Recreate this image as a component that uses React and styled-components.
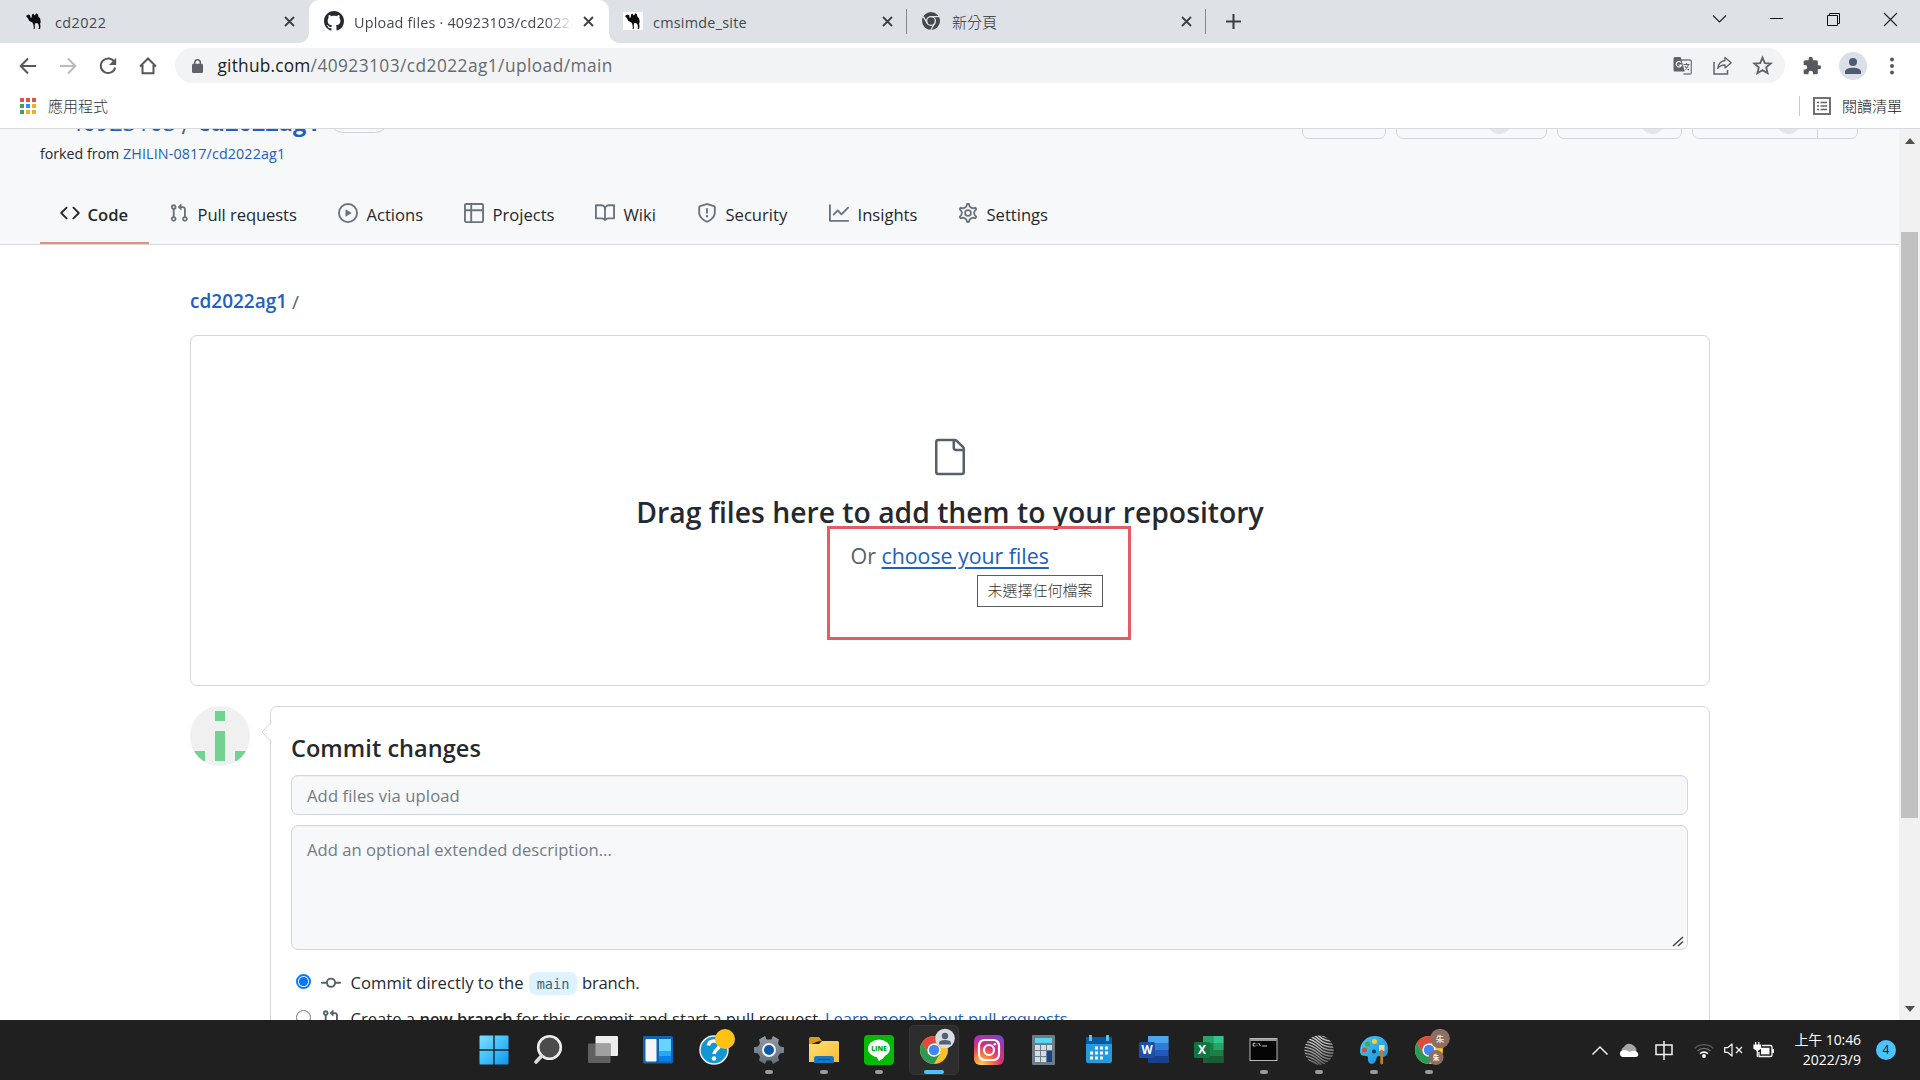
import React from "react";
import styled, { createGlobalStyle } from "styled-components";

const GlobalStyle = createGlobalStyle`
  *, *::before, *::after { box-sizing: border-box; }
  html, body { margin: 0; padding: 0; overflow: hidden; background: #fff; }
  body { font-family: "Open Sans", "Noto Sans CJK TC", sans-serif; color: #24292f; }
`;

const Screen = styled.div`
  width: 1920px;
  height: 1080px;
  display: flex;
  flex-direction: column;
  overflow: hidden;
`;

const Icon = styled.svg`
  display: block;
  flex: none;
  overflow: visible;
  margin-left: ${(p) => p.$ml || 0}px;
`;

const Text = styled.span`
  display: block;
  flex: none;
  white-space: pre;
  width: ${(p) => (p.$w ? `${p.$w}px` : "auto")};
  margin-left: ${(p) => p.$ml || 0}px;
  margin-top: ${(p) => p.$mt || 0}px;
  font-size: ${(p) => p.$size || 16.6}px;
  font-weight: ${(p) => p.$weight || 400};
  letter-spacing: ${(p) => p.$ls || 0}px;
  line-height: ${(p) => p.$lh || 24}px;
  color: ${(p) => p.$color || "#24292f"};
  text-align: ${(p) => p.$align || "left"};
`;

/* ---------- browser tabs ---------- */

const TabStrip = styled.div`
  height: 43px;
  flex: none;
  display: flex;
  background: #dee1e6;
`;

const Tab = styled.div`
  position: relative;
  width: ${(p) => p.$w}px;
  height: 43px;
  display: flex;
  align-items: center;
  padding: 0 0 1px ${(p) => p.$pl}px;
  background: ${(p) => (p.$active ? "#fff" : "transparent")};
  border-radius: ${(p) => (p.$active ? "10px 10px 0 0" : "0")};
  &::before, &::after {
    content: "";
    display: ${(p) => (p.$active ? "block" : "none")};
    position: absolute;
    bottom: 0;
    width: 10px;
    height: 10px;
  }
  &::before { left: -10px; background: radial-gradient(circle at 0 0, transparent 9.5px, #fff 10px); }
  &::after { right: -10px; background: radial-gradient(circle at 100% 0, transparent 9.5px, #fff 10px); }
`;

const TabTitle = styled(Text)`
  width: ${(p) => p.$w}px;
  overflow: hidden;
  ${(p) => p.$fade && "-webkit-mask-image: linear-gradient(90deg, #000 87%, transparent 100%);"}
`;

const TabDivider = styled.div`
  width: 1px;
  height: 25px;
  margin-top: 9px;
  background: #85888d;
`;

const WindowControls = styled.div`
  margin-left: auto;
  display: flex;
  align-items: center;
  height: 38px;
  gap: 44px;
  padding-right: 23px;
`;

const CloseX = ({ ml = 0 }) => (
  <Icon width="11" height="11" viewBox="0 0 11 11" $ml={ml}>
    <path d="M1 1l9 9M10 1l-9 9" stroke="#3c4043" strokeWidth="1.8" fill="none" />
  </Icon>
);

const Camel = ({ ml = 0, boxed }) => (
  <Icon width="20" height="18" viewBox="0 0 20 18" $ml={ml}>
    {boxed && <rect width="20" height="18" fill="#fff" />}
    <path
      d="M2.5 3.5l2-1 1.7.8.3 2.4 1.2-.2L8 2.8 9.3 1.5l1 1.5.6.6L12.3 1.300l1.5.9.7 2.5 1.6 1.6.6 3.7-.6 1.700.4 2.300-.4 3h-1.800l.7-1-.3-3.300-1.6-1.700-2 .2-.4 2.300.3 3.200H9.300l.6-1-.6-3.500-.9-1.700-3-1.400L3.600 5.800 2.300 4.800z"
      fill="#0a0a0a"
    />
  </Icon>
);

const Octocat = () => (
  <Icon width="20" height="20" viewBox="0 0 16 16" fill="#24292f">
    <path d="M8 0C3.58 0 0 3.58 0 8c0 3.54 2.29 6.53 5.47 7.59.4.07.55-.17.55-.38 0-.19-.01-.82-.01-1.49-2.01.37-2.53-.49-2.69-.94-.09-.23-.48-.94-.82-1.13-.28-.15-.68-.52-.01-.53.63-.01 1.08.58 1.23.82.72 1.21 1.87.87 2.33.66.07-.52.28-.87.51-1.07-1.78-.2-3.64-.89-3.64-3.95 0-.87.31-1.59.82-2.15-.08-.2-.36-1.02.08-2.12 0 0 .67-.21 2.2.82.64-.18 1.32-.27 2-.27s1.36.09 2 .27c1.53-1.04 2.2-.82 2.2-.82.44 1.1.16 1.92.08 2.12.51.56.82 1.27.82 2.15 0 3.07-1.87 3.75-3.65 3.95.29.25.54.73.54 1.48 0 1.07-.01 1.93-.01 2.2 0 .21.15.46.55.38A8.01 8.01 0 0016 8c0-4.42-3.58-8-8-8z" />
  </Icon>
);

const ChromeMono = () => (
  <Icon width="18" height="18" viewBox="0 0 18 18">
    <circle cx="9" cy="9" r="9" fill="#45484c" />
    <circle cx="9" cy="9" r="4.4" fill="none" stroke="#dee1e6" strokeWidth="1.4" />
    <path d="M9 4.6h8M5.2 11.2L1.3 4.6M12.8 11.2l-4 6.8" stroke="#dee1e6" strokeWidth="1.3" />
  </Icon>
);

const Tabs = () => (
  <TabStrip>
    <Tab $w={309} $pl={24}>
      <Camel />
      <TabTitle $ml={11} $w={229} $size={14.4} $color="#45494d" $ls={0.45} $mt={3}>cd2022</TabTitle>
      <CloseX />
    </Tab>
    <Tab $w={300} $pl={15} $active>
      <Octocat />
      <TabTitle $ml={10} $w={219} $size={14.4} $color="#45494d" $ls={0.2} $mt={3} $fade>Upload files · 40923103/cd2022ag1</TabTitle>
      <CloseX ml={10} />
    </Tab>
    <Tab $w={297} $pl={14}>
      <Camel boxed />
      <TabTitle $ml={10} $w={229} $size={14.4} $color="#45494d" $ls={0.25} $mt={3}>cmsimde_site</TabTitle>
      <CloseX />
    </Tab>
    <TabDivider />
    <Tab $w={298} $pl={15}>
      <ChromeMono />
      <TabTitle $ml={12} $w={229} $size={15} $weight={300} $color="#303336" $mt={2}>新分頁</TabTitle>
      <CloseX />
    </Tab>
    <TabDivider />
    <Tab $w={40} $pl={20}>
      <Icon width="15" height="15" viewBox="0 0 15 15">
        <path d="M7.5 0v15M0 7.5h15" stroke="#3c4043" strokeWidth="2.1" />
      </Icon>
    </Tab>
    <WindowControls>
      <Icon width="13" height="8" viewBox="0 0 13 8"><path d="M0 .5l6.5 6.5L13 .5" fill="none" stroke="#222" strokeWidth="1.1" /></Icon>
      <Icon width="13" height="13" viewBox="0 0 13 13"><path d="M0 5.5h13" stroke="#111" strokeWidth="1" /></Icon>
      <Icon width="13" height="13" viewBox="0 0 13 13"><path d="M.5 2.5h10v10H.5zM2.5 2.5v-2h10v10h-2" fill="none" stroke="#111" /></Icon>
      <Icon width="13" height="13" viewBox="0 0 13 13"><path d="M0 0l13 13M13 0L0 13" stroke="#222" strokeWidth="1.1" /></Icon>
    </WindowControls>
  </TabStrip>
);

/* ---------- toolbar ---------- */

const Toolbar = styled.div`
  height: 45px;
  flex: none;
  display: flex;
  align-items: center;
  padding: 0 0 0 19px;
  background: #fff;
`;

const NavButtons = styled.div`
  width: 156px;
  display: flex;
  gap: 22px;
`;

const Omnibox = styled.div`
  width: 1610px;
  height: 35px;
  display: flex;
  align-items: center;
  padding-left: 17px;
  border-radius: 18px;
  background: #f1f3f4;
`;

const OmniActions = styled.div`
  display: flex;
  gap: 21px;
  margin-left: auto;
  padding-right: 13px;
`;

const Avatar = styled.div`
  width: 28px;
  height: 28px;
  margin-left: 17px;
  border-radius: 50%;
  display: flex;
  align-items: center;
  justify-content: center;
  background: #dadfe8;
`;

const AddressBar = () => (
  <Toolbar>
    <NavButtons>
      <Icon width="18" height="18" viewBox="0 0 18 18"><path d="M17 9H2.5M9 1.5L1.7 9 9 16.5" fill="none" stroke="#55595d" strokeWidth="2" /></Icon>
      <Icon width="18" height="18" viewBox="0 0 18 18"><path d="M1 9h14.5M9 1.5L16.3 9 9 16.5" fill="none" stroke="#b9bbbe" strokeWidth="2" /></Icon>
      <Icon width="18" height="18" viewBox="0 0 18 18">
        <path d="M15.4 5A7.3 7.3 0 1 0 16.2 10.5" fill="none" stroke="#55595d" strokeWidth="2" />
        <path d="M17.2.8v7.2H10z" fill="#55595d" />
      </Icon>
      <Icon width="18" height="18" viewBox="0 0 18 18"><path d="M1 9.5L9 1.5l8 8M3.5 8v8.2h11V8" fill="none" stroke="#55595d" strokeWidth="2" /></Icon>
    </NavButtons>
    <Omnibox>
      <Icon width="11" height="14" viewBox="0 0 11 14">
        <rect y="4.8" width="11" height="9.2" rx="1.2" fill="#5f6368" />
        <path d="M2.7 5.5V3.6a2.8 2.8 0 0 1 5.6 0v1.9" fill="none" stroke="#5f6368" strokeWidth="1.5" />
      </Icon>
      <Text $ml={14.5} $size={17.3} $ls={0.22} $color="#202124">github.com</Text>
      <Text $size={17.3} $ls={0.45} $color="#676b70">/40923103/cd2022ag1/upload/main</Text>
      <OmniActions>
        <Icon width="19" height="19" viewBox="0 0 19 19">
          <path d="M8 4h9a1.3 1.3 0 0 1 1.3 1.3v11.4A1.3 1.3 0 0 1 17 18H10.5" fill="none" stroke="#777b80" strokeWidth="1.3" />
          <path d="M2 1h5.6l4.2 14.5H2A1.5 1.5 0 0 1 .5 14V2.5A1.5 1.5 0 0 1 2 1z" fill="#5f6368" />
          <path d="M8 6.5A2.7 2.7 0 1 0 8.5 9H5.8" fill="none" stroke="#fff" strokeWidth="1.2" />
          <path d="M10.5 8.5h6M13.5 7v1.5M15.5 8.5c-.5 2.5-2 4-3.5 5M12 10c.8 1.7 2 3 4 4" fill="none" stroke="#5f6368" strokeWidth="1.1" />
        </Icon>
        <Icon width="19" height="19" viewBox="0 0 19 19">
          <path d="M1 6v12h13.5v-4" fill="none" stroke="#5f6368" strokeWidth="1.5" />
          <path d="M12 1.5l6.2 5.2-6.2 5.2V9c-3.5 0-5.6 1-7.3 3.5C5.2 8.5 7.5 5.2 12 4.5z" fill="none" stroke="#5f6368" strokeWidth="1.3" strokeLinejoin="round" />
        </Icon>
        <Icon width="19" height="19" viewBox="0 0 24 24">
          <path d="M12 2l2.9 6.9 7.5.6-5.7 4.9 1.7 7.3L12 17.9l-6.4 3.8 1.7-7.3-5.7-4.9 7.5-.6z" fill="none" stroke="#5f6368" strokeWidth="2.3" />
        </Icon>
      </OmniActions>
    </Omnibox>
    <Icon width="20" height="20" viewBox="0 0 24 24" $ml={17}>
      <path fill="#55595d" d="M20.5 11H19V7c0-1.1-.9-2-2-2h-4V3.5a2.5 2.5 0 0 0-5 0V5H4c-1.1 0-2 .9-2 2v3.8h1.5a2.7 2.7 0 0 1 0 5.4H2V20c0 1.1.9 2 2 2h3.8v-1.5a2.7 2.7 0 0 1 5.4 0V22H17c1.1 0 2-.9 2-2v-4h1.5a2.5 2.5 0 0 0 0-5z" />
    </Icon>
    <Avatar>
      <Icon width="16" height="16" viewBox="0 0 16 16"><circle cx="8" cy="4" r="4" fill="#4b5b70" /><path d="M0 16v-2.2C0 11 4 9.8 8 9.8s8 1.2 8 4V16z" fill="#4b5b70" /></Icon>
    </Avatar>
    <Icon width="4" height="18" viewBox="0 0 4 18" $ml={23} fill="#55595d">
      <circle cx="2" cy="2.5" r="2" /><circle cx="2" cy="9" r="2" /><circle cx="2" cy="15.5" r="2" />
    </Icon>
  </Toolbar>
);

const Bookmarks = styled.div`
  height: 41px;
  flex: none;
  display: flex;
  align-items: center;
  padding: 0 18px 4px 20px;
  border-bottom: 1px solid #d6d9dd;
  background: #fff;
`;

const AppsGrid = styled.div`
  display: grid;
  grid-template-columns: repeat(3, 4px);
  gap: 2px;
`;

const AppDot = styled.i`
  height: 4px;
  background: ${(p) => p.$c};
`;

const BarDivider = styled.div`
  width: 1px;
  height: 20px;
  margin-left: auto;
  background: #c9cbce;
`;

const APP_DOTS = ["#e0524a", "#e0524a", "#e0524a", "#3fa35c", "#2f8fe8", "#eeb02c", "#3fa35c", "#eeb02c", "#eeb02c"];

const BookmarksBar = () => (
  <Bookmarks>
    <AppsGrid>
      {APP_DOTS.map((c, i) => <AppDot key={i} $c={c} />)}
    </AppsGrid>
    <Text $ml={12} $size={15} $weight={300} $color="#303336">應用程式</Text>
    <BarDivider />
    <Icon width="18" height="18" viewBox="0 0 18 18" $ml={13}>
      <rect x="1" y="1" width="16" height="16" fill="none" stroke="#5f6368" strokeWidth="1.8" />
      <path d="M4 5.5h2M4 9h2M4 12.5h2M7.5 5.5h6.5M7.5 9h6.5M7.5 12.5h6.5" stroke="#5f6368" strokeWidth="1.7" />
    </Icon>
    <Text $ml={11} $size={15} $weight={300} $color="#111">閱讀清單</Text>
  </Bookmarks>
);

/* ---------- page ---------- */

const Viewport = styled.div`
  height: 891px;
  flex: none;
  display: flex;
  overflow: hidden;
`;

const Page = styled.main`
  width: 1899px;
  height: 891px;
  overflow: hidden;
`;

const RepoHeader = styled.header`
  height: 116px;
  background: #f6f8fa;
  border-bottom: 1px solid #d5dae0;
  display: flex;
  flex-direction: column;
`;

const TitleRow = styled.div`
  height: 35px;
  margin-top: -25px;
  flex: none;
  display: flex;
  padding: 0 41px 0 69px;
`;

const Pill = styled.div`
  width: 58px;
  height: 25px;
  margin: 4px auto 0 0;
  border: 1px solid #cdd3da;
  border-radius: 13px;
`;

const RepoButton = styled.div`
  width: ${(p) => p.$w}px;
  height: 35px;
  margin-left: ${(p) => p.$ml || 0}px;
  padding-left: ${(p) => p.$pl || 0}px;
  border: 1px solid #d2d5d9;
  border-radius: ${(p) => p.$r || "7px"};
  display: flex;
  align-items: center;
`;

const Counter = styled.i`
  width: 25px;
  height: 25px;
  border-radius: 13px;
  background: #e2e5e9;
`;

const ForkRow = styled.div`
  display: flex;
  height: 31px;
  align-items: center;
  padding: 1px 0 0 40px;
`;

const RepoNav = styled.nav`
  display: flex;
  height: 60px;
  margin-top: 16px;
  padding-left: 40px;
`;

const NavItem = styled.a`
  width: ${(p) => p.$w}px;
  height: 60px;
  flex: none;
  display: flex;
  align-items: center;
  padding: 0 0 0 20px;
  border-bottom: 2px solid ${(p) => (p.$active ? "#e88f7b" : "transparent")};
`;

const PULL_REQUEST = "M7.177 3.073L9.573.677A.25.25 0 0110 .854v4.792a.25.25 0 01-.427.177L7.177 3.427a.25.25 0 010-.354zM3.75 2.5a.75.75 0 100 1.5.75.75 0 000-1.5zm-2.25.75a2.25 2.25 0 113 2.122v5.256a2.251 2.251 0 11-1.5 0V5.372A2.25 2.25 0 011.5 3.25zM11 2.5h-1V4h1a1 1 0 011 1v5.628a2.251 2.251 0 101.5 0V5A2.5 2.5 0 0011 2.5zm1 10.25a.75.75 0 111.5 0 .75.75 0 01-1.5 0zM3.75 12a.75.75 0 100 1.5.75.75 0 000-1.5z";

const COMMIT = "M10.5 7.75a2.5 2.5 0 11-5 0 2.5 2.5 0 015 0zm1.43.75a4.002 4.002 0 01-7.86 0H.75a.75.75 0 110-1.5h3.32a4.001 4.001 0 017.86 0h3.32a.75.75 0 110 1.5h-3.32z";

const NAV = [
  { w: 109, label: "Code", active: true, d: "M4.72 3.22a.75.75 0 011.06 1.06L2.06 8l3.72 3.72a.75.75 0 11-1.06 1.06L.47 8.53a.75.75 0 010-1.06l4.25-4.25zm6.56 0a.75.75 0 10-1.06 1.06L13.94 8l-3.72 3.72a.75.75 0 101.06 1.06l4.25-4.25a.75.75 0 000-1.06l-4.25-4.25z" },
  { w: 169, label: "Pull requests", ls: -0.08, d: PULL_REQUEST },
  { w: 126, label: "Actions", d: "M1.5 8a6.5 6.5 0 1113 0 6.5 6.5 0 01-13 0zM8 0a8 8 0 100 16A8 8 0 008 0zM6.379 5.227A.25.25 0 006 5.442v5.117a.25.25 0 00.379.214l4.264-2.559a.25.25 0 000-.428L6.379 5.227z" },
  { w: 131, label: "Projects", d: "M1.75 0A1.75 1.75 0 000 1.75v12.5C0 15.216.784 16 1.75 16h12.5A1.75 1.75 0 0016 14.25V1.75A1.75 1.75 0 0014.25 0H1.75zM1.5 1.75a.25.25 0 01.25-.25H5V5H1.5V1.75zM6.5 6.5v8h7.75a.25.25 0 00.25-.25V6.5h-8zm8-1.5V1.75a.25.25 0 00-.25-.25H6.5V5h8zm-13 1.5v7.75c0 .138.112.25.25.25H5v-8H1.5z" },
  { w: 102, label: "Wiki", d: "M0 1.75A.75.75 0 01.75 1h4.253c1.227 0 2.317.59 3 1.501A3.744 3.744 0 0111.006 1h4.245a.75.75 0 01.75.75v10.5a.75.75 0 01-.75.75h-4.507a2.25 2.25 0 00-1.591.659l-.622.621a.75.75 0 01-1.06 0l-.622-.621A2.25 2.25 0 005.258 13H.75a.75.75 0 01-.75-.75V1.75zm8.755 3a2.25 2.25 0 012.25-2.25H14.5v9h-3.757c-.71 0-1.4.201-1.992.572l.004-7.322zm-1.504 7.324l.004-5.073-.002-2.253A2.25 2.25 0 005.003 2.5H1.5v9h3.757a3.75 3.75 0 011.994.574z" },
  { w: 132, label: "Security", d: "M7.467.133a1.75 1.75 0 011.066 0l5.25 1.68A1.75 1.75 0 0115 3.48V7c0 1.566-.32 3.182-1.303 4.682-.983 1.498-2.585 2.813-5.032 3.855a1.7 1.7 0 01-1.33 0c-2.447-1.042-4.049-2.357-5.032-3.855C1.32 10.182 1 8.566 1 7V3.48a1.75 1.75 0 011.217-1.667l5.25-1.68zm.61 1.429a.25.25 0 00-.153 0l-5.25 1.68a.25.25 0 00-.174.238V7c0 1.358.275 2.666 1.057 3.86.784 1.194 2.121 2.34 4.366 3.297a.2.2 0 00.154 0c2.245-.956 3.582-2.104 4.366-3.298C13.225 9.666 13.5 8.36 13.5 7V3.48a.25.25 0 00-.174-.237l-5.25-1.68zM9 10.5a1 1 0 11-2 0 1 1 0 012 0zm-.25-5.75a.75.75 0 10-1.5 0v3a.75.75 0 001.5 0v-3z" },
  { w: 129, label: "Insights", d: "M1.5 1.75a.75.75 0 00-1.5 0v12.5c0 .414.336.75.75.75h14.5a.75.75 0 000-1.5H1.5V1.75zm14.28 2.53a.75.75 0 00-1.06-1.06L10 7.94 7.53 5.47a.75.75 0 00-1.06 0L3.22 8.72a.75.75 0 001.06 1.06L7 7.06l2.47 2.47a.75.75 0 001.06 0l5.25-5.25z" },
  { w: 130, label: "Settings", stroke: true, d: "M7.429 1.525a6.593 6.593 0 011.142 0c.036.003.108.036.137.146l.289 1.105c.147.56.55.967.997 1.189.174.086.341.183.501.29.417.278.97.423 1.53.27l1.102-.303c.11-.03.175.016.195.046.219.31.41.641.573.989.014.031.022.11-.059.19l-.815.806c-.411.406-.562.957-.53 1.456a4.588 4.588 0 010 .582c-.032.499.119 1.05.53 1.456l.815.806c.08.08.073.159.059.19a6.494 6.494 0 01-.573.99c-.02.029-.086.074-.195.045l-1.103-.303c-.559-.153-1.112-.008-1.529.27-.16.107-.327.204-.5.29-.449.222-.851.628-.998 1.189l-.289 1.105c-.029.11-.101.143-.137.146a6.613 6.613 0 01-1.142 0c-.036-.003-.108-.037-.137-.146l-.289-1.105c-.147-.56-.55-.967-.997-1.189a4.502 4.502 0 01-.501-.29c-.417-.278-.97-.423-1.53-.27l-1.102.303c-.11.03-.175-.016-.195-.046a6.492 6.492 0 01-.573-.989c-.014-.031-.022-.11.059-.19l.815-.806c.411-.406.562-.957.53-1.456a4.587 4.587 0 010-.582c.032-.499-.119-1.05-.53-1.456l-.815-.806c-.08-.08-.073-.159-.059-.19a6.44 6.44 0 01.573-.99c.02-.029.086-.075.195-.045l1.103.303c.559.153 1.112.008 1.529-.27.16-.107.327-.204.5-.29.449-.222.851-.628.998-1.189l.289-1.105c.029-.11.101-.143.137-.146z" },
];

const Content = styled.section`
  width: 1520px;
  margin-left: 190px;
`;

const Crumbs = styled.div`
  height: 90px;
  display: flex;
  align-items: flex-start;
  padding-top: 42px;
`;

const DropZone = styled.div`
  height: 351px;
  border: 1px solid #d2d7dc;
  border-radius: 7px;
  display: flex;
  flex-direction: column;
  align-items: center;
  padding-top: 101px;
`;

const ChooseRow = styled.div`
  position: relative;
  width: 304px;
  height: 44px;
  flex: none;
  display: flex;
  align-items: center;
  margin-left: 58px;
  padding-left: 23.5px;
`;

const ChooseLink = styled(Text)`
  text-decoration: underline;
  text-decoration-thickness: 2px;
  text-underline-offset: 3px;
`;

const Highlight = styled.div`
  position: absolute;
  left: 0;
  top: -8px;
  width: 304px;
  height: 114px;
  border: 3px solid #e25c61;
`;

const Tooltip = styled.div`
  position: absolute;
  left: 150px;
  top: 41px;
  width: 126px;
  height: 32px;
  display: flex;
  align-items: center;
  justify-content: center;
  padding-bottom: 2px;
  border: 1px solid #5c5c5c;
  background: #fff;
`;

const CommitRow = styled.div`
  display: flex;
  margin-top: 20px;
`;

const CommitBox = styled.div`
  position: relative;
  width: 1440px;
  height: 420px;
  margin-left: 20px;
  padding: 24px 21px 0 20px;
  border: 1px solid #d2d7dc;
  border-radius: 7px;
`;

const Caret = styled.svg`
  position: absolute;
  left: -10px;
  top: 15px;
`;

const Field = styled.div`
  height: ${(p) => p.$h}px;
  margin-top: ${(p) => p.$mt}px;
  padding: ${(p) => p.$pt}px 6px 3px 15px;
  border: 1px solid #d0d7de;
  border-radius: 7px;
  background: #f6f8fa;
  box-shadow: inset 0 1px 0 rgba(208, 215, 222, 0.2);
  display: flex;
  justify-content: space-between;
`;

const Grip = styled.svg`
  align-self: flex-end;
  margin-right: -3px;
  margin-bottom: -1px;
`;

const Options = styled.div`
  margin-top: 15px;
`;

const Option = styled.label`
  height: 36px;
  display: flex;
  align-items: center;
  padding-left: 5px;
`;

const Radio = styled.i`
  width: 15px;
  height: 15px;
  flex: none;
  margin-bottom: 3px;
  border-radius: 50%;
  border: ${(p) => (p.$on ? "2px solid #0b75ff" : "1px solid #767676")};
  background: ${(p) => (p.$on ? "radial-gradient(circle, #0b75ff 4.2px, #fff 4.8px)" : "#fff")};
`;

const OptionIcon = styled(Icon)`
  margin: 0 0 1px 10px;
`;

const Branch = styled.code`
  width: 48px;
  height: 23px;
  flex: none;
  border-radius: 7px;
  background: #ddf4ff;
  color: #48606f;
  font: 13.6px/25px "DejaVu Sans Mono", monospace;
  text-align: center;
`;

const ScrollBar = styled.div`
  width: 21px;
  height: 891px;
  display: flex;
  flex-direction: column;
  align-items: center;
  padding: 9px 0 8px;
  background: #f1f1f1;
`;

const Thumb = styled.div`
  width: 17px;
  height: 586px;
  margin: 88px 0 auto;
  background: #c1c1c1;
`;

const LINK = "#2160bd";

const GitHubPage = () => (
  <Page>
    <RepoHeader>
      <TitleRow>
        <Text $size={23.5} $color={LINK} $lh={35} $w={112.5} $mt={1}>40923103</Text>
        <Text $size={23.5} $color="#57606a" $lh={35} $w={16.5} $mt={4}>/</Text>
        <Text $size={23.5} $color={LINK} $lh={35} $weight={700} $w={132} $mt={1}>cd2022ag1</Text>
        <Pill />
        <RepoButton $w={84} />
        <RepoButton $w={151} $ml={10} $pl={90}><Counter /></RepoButton>
        <RepoButton $w={125} $ml={10} $pl={82}><Counter /></RepoButton>
        <RepoButton $w={126} $ml={10} $pl={83} $r="7px 0 0 7px"><Counter /></RepoButton>
        <RepoButton $w={41} $ml={-1} $r="0 7px 7px 0" />
      </TitleRow>
      <ForkRow>
        <Text $size={14.2} $w={83}>forked from</Text>
        <Text $size={14.3} $ls={0.12} $color={LINK}>ZHILIN-0817/cd2022ag1</Text>
      </ForkRow>
      <RepoNav>
        {NAV.map((n) => (
          <NavItem key={n.label} $w={n.w} $active={n.active}>
            <Icon width="20" height="20" viewBox="0 0 16 16" fill={n.active ? "#24292f" : "#6b747d"}>
              {n.stroke ? (
                <g fill="none" stroke="#6b747d" strokeWidth="1.3" transform="translate(8 8) scale(1.11) translate(-8 -8)"><path d={n.d} /><circle cx="8" cy="8" r="2.1" /></g>
              ) : (
                <path d={n.d} fillRule="evenodd" />
              )}
            </Icon>
            <Text $ml={n.active ? 7.5 : 8.5} $size={16.6} $ls={n.ls} $mt={3} $weight={n.active ? 600 : 400}>{n.label}</Text>
          </NavItem>
        ))}
      </RepoNav>
    </RepoHeader>
    <Content>
      <Crumbs>
        <Text $size={19} $weight={600} $lh={28} $color={LINK} $w={102}>cd2022ag1</Text>
        <Text $size={19} $lh={28} $mt={1} $color="#57606a">/</Text>
      </Crumbs>
      <DropZone>
        <Icon width="40" height="40" viewBox="0 0 24 24" fill="#57606a">
          <path fillRule="evenodd" d="M5 2.5a.5.5 0 00-.5.5v18a.5.5 0 00.5.5h14a.5.5 0 00.5-.5V8.5h-4a2 2 0 01-2-2v-4H5zm10 0v4a.5.5 0 00.5.5h4a.5.5 0 00-.146-.336l-4.018-4.018A.5.5 0 0015 2.5zM3 3a2 2 0 012-2h9.982a2 2 0 011.414.586l4.018 4.018A2 2 0 0121 7.018V21a2 2 0 01-2 2H5a2 2 0 01-2-2V3z" />
        </Icon>
        <Text $size={28.3} $weight={600} $lh={44} $mt={13}>Drag files here to add them to your repository</Text>
        <ChooseRow>
          <Text $size={21.5} $color="#57606a" $w={31}>Or</Text>
          <ChooseLink $size={21.3} $color={LINK}>choose your files</ChooseLink>
          <Highlight />
          <Tooltip><Text $size={15} $weight={300} $color="#333">未選擇任何檔案</Text></Tooltip>
        </ChooseRow>
      </DropZone>
      <CommitRow>
        <Icon width="60" height="60" viewBox="0 0 60 60">
          <defs><clipPath id="round"><circle cx="30" cy="30" r="30" /></clipPath></defs>
          <g clipPath="url(#round)">
            <rect width="60" height="60" fill="#f0f0f0" />
            <path d="M25 5h10v10H25zM25 25h10v30H25zM0 45h15v10H0zM45 45h15v10H45z" fill="#72d28f" />
          </g>
        </Icon>
        <CommitBox>
          <Caret width="11" height="20" viewBox="0 0 11 20">
            <path d="M11 0L1 10l10 10z" fill="#fff" />
            <path d="M10 .5L1 10l9 9.5" fill="none" stroke="#d2d7dc" />
          </Caret>
          <Text $size={23.5} $weight={600} $lh={34} $ls={0.05}>Commit changes</Text>
          <Field $h={40} $mt={10} $pt={8}><Text $ls={0.12} $color="#747b83">Add files via upload</Text></Field>
          <Field $h={125} $mt={10} $pt={12}>
            <Text $ls={0.02} $color="#747b83">Add an optional extended description...</Text>
            <Grip width="12" height="11" viewBox="0 0 12 11"><path d="M1 10l10-9M6 10l5-4.5" stroke="#444" strokeWidth="1.5" /></Grip>
          </Field>
          <Options>
            <Option>
              <Radio $on />
              <OptionIcon width="20" height="20" viewBox="0 0 16 16" fill="#57606a"><path fillRule="evenodd" d={COMMIT} /></OptionIcon>
              <Text $ml={9.5} $ls={0.04} $w={178.5}>Commit directly to the</Text>
              <Branch>main</Branch>
              <Text $ml={5} $ls={-0.2}>branch.</Text>
            </Option>
            <Option>
              <Radio />
              <OptionIcon width="20" height="20" viewBox="0 0 16 16" fill="#57606a"><path fillRule="evenodd" d={PULL_REQUEST} /></OptionIcon>
              <Text $ml={9.5} $w={69}>Create a</Text>
              <Text $weight={600} $size={16.4} $w={96.5}>new branch</Text>
              <Text $w={309}>for this commit and start a pull request.</Text>
              <Text $ls={-0.06} $color={LINK}>Learn more about pull requests.</Text>
            </Option>
          </Options>
        </CommitBox>
      </CommitRow>
    </Content>
  </Page>
);

/* ---------- taskbar ---------- */

const Taskbar = styled.footer`
  height: 60px;
  flex: none;
  display: flex;
  align-items: center;
  padding-left: 466px;
  background: #202020;
`;

const Slot = styled.div`
  position: relative;
  width: 55px;
  height: 60px;
  display: flex;
  align-items: center;
  justify-content: center;
  &::after {
    content: "";
    display: ${(p) => (p.$run ? "block" : "none")};
    position: absolute;
    bottom: 6px;
    left: ${(p) => (p.$on ? 18 : 24)}px;
    width: ${(p) => (p.$on ? 20 : 8)}px;
    height: 4px;
    border-radius: 2px;
    background: ${(p) => (p.$on ? "#4cc2ff" : "#9a9a9a")};
  }
`;

const ActiveTile = styled.div`
  width: 50px;
  height: 50px;
  display: flex;
  align-items: center;
  justify-content: center;
  border: 1px solid #373737;
  border-radius: 5px;
  background: #2d2d2d;
`;

const Tray = styled.div`
  display: flex;
  align-items: center;
  margin-left: auto;
  padding-right: 24px;
`;

const Clock = styled.div`
  width: 84px;
  margin-left: 3px;
`;

const Badge = styled.div`
  width: 20px;
  height: 20px;
  margin-left: 15px;
  border-radius: 50%;
  background: #4cc2ff;
  display: flex;
  align-items: center;
  justify-content: center;
`;

const AppIcon = ({ children }) => <Icon width="30" height="30" viewBox="0 0 30 30">{children}</Icon>;

const ChromeColor = ({ children }) => (
  <AppIcon>
    <circle cx="15" cy="15" r="14" fill="#fbc02d" />
    <path d="M15 1A14 14 0 0 1 27.1 8H15L9 18.5 2.9 8A14 14 0 0 1 15 1z" fill="#e04a3f" />
    <path d="M2.9 8A14 14 0 0 0 15 29l6-10.5-6 3.5-6-3.5z" fill="#2a9a57" />
    <circle cx="15" cy="15" r="6.6" fill="#fff" />
    <circle cx="15" cy="15" r="5.2" fill="#4285f4" />
    {children}
  </AppIcon>
);

const SvgLabel = styled.text`
  font-family: "Open Sans", "Noto Sans CJK TC", sans-serif;
  font-size: ${(p) => p.$size}px;
  font-weight: ${(p) => p.$weight || 700};
  text-anchor: middle;
`;

const Defs = () => (
  <defs>
    <linearGradient id="win" x1="0" y1="0" x2="1" y2="1"><stop offset="0" stopColor="#82dcff" /><stop offset=".5" stopColor="#3fc0fb" /><stop offset="1" stopColor="#1093ee" /></linearGradient>
    <linearGradient id="folder" x1="0" y1="0" x2="1" y2="1"><stop offset="0" stopColor="#ffdf74" /><stop offset="1" stopColor="#f9bd32" /></linearGradient>
    <radialGradient id="insta" cx=".25" cy="1" r="1.2"><stop offset="0" stopColor="#ffd35c" /><stop offset=".3" stopColor="#f9763e" /><stop offset=".55" stopColor="#db2e78" /><stop offset=".85" stopColor="#9538bc" /><stop offset="1" stopColor="#6350cf" /></radialGradient>
    <linearGradient id="gear" x1="0" y1="0" x2="0" y2="1"><stop offset="0" stopColor="#929ba4" /><stop offset="1" stopColor="#626d78" /></linearGradient>
    <linearGradient id="paint" x1="0" y1="0" x2="1" y2="1"><stop offset="0" stopColor="#4ccbf5" /><stop offset="1" stopColor="#148ad5" /></linearGradient>
    <clipPath id="ball"><circle cx="15" cy="15" r="14.5" /></clipPath>
    <linearGradient id="shade" x1=".3" y1="0" x2=".5" y2="1"><stop offset="0" stopColor="#202020" stopOpacity="0" /><stop offset="1" stopColor="#202020" stopOpacity=".6" /></linearGradient>
  </defs>
);

const CALENDAR_CELLS = [[11, 11.5], [16, 11.5], [21, 11.5], [6, 16.5], [11, 16.5], [16, 16.5], [21, 16.5], [6, 21.5], [11, 21.5], [16, 21.5]];
const BALL_LINES = [-10, -7, -4, -1, 2, 5, 8, 11, 14, 17, 20, 23];

const TaskApps = () => (
  <>
    <Slot><AppIcon><Defs /><path d="M.5 1.5Q.5.5 1.5.5H14.3V14.3H.5zM15.7.5H28.5Q29.5.5 29.5 1.5V14.3H15.7zM.5 15.7H14.3V29.5H1.5Q.5 29.5.5 28.5zM15.7 15.7H29.5V28.5Q29.5 29.5 28.5 29.5H15.7z" fill="url(#win)" /></AppIcon></Slot>
    <Slot><AppIcon><circle cx="15.5" cy="12.5" r="11.3" fill="#4c4c4c" stroke="#ededed" strokeWidth="2.6" /><path d="M7.5 21l-5.500 6" stroke="#ddd" strokeWidth="3.6" strokeLinecap="round" /></AppIcon></Slot>
    <Slot><AppIcon><g transform="translate(-1 0)"><rect x="7.5" y="1" width="22.5" height="20" rx="1" fill="#ededed" /><rect y="8.5" width="22.5" height="19.5" rx="1" fill="#666" opacity=".92" /><rect x="7.5" y="8.5" width="15" height="12.5" fill="#a0a0a0" /></g></AppIcon></Slot>
    <Slot><AppIcon><g transform="translate(-1 0)"><rect y="1" width="30" height="27.5" rx="1.5" fill="#0e63b5" /><rect x="2.5" y="4" width="11" height="22.5" rx="1" fill="#f5f5f5" /><path d="M16 4h12v12H16z" fill="#65d5fd" /><path d="M16 16h12v5H16z" fill="#29a7f5" /><path d="M16 21h12v5.5H16z" fill="#0b7fe8" /></g></AppIcon></Slot>
    <Slot><AppIcon><circle cx="15" cy="15" r="14" fill="#1397d4" stroke="#eee" strokeWidth="1.5" /><path d="M9.5 10.5Q10 6 15 6t5.5 4.5C20.5 14 15.5 14.5 15 19" fill="none" stroke="#fff" strokeWidth="3.6" /><circle cx="15" cy="23.5" r="2.3" fill="#fff" /><circle cx="26" cy="4" r="10" fill="#ffc114" /></AppIcon></Slot>
    <Slot $run><AppIcon><path d="M11 1l1.7 3.5h4.6L19 1l6 3.4-1 3.8 2 3.3 4 .7v5.6l-4 .7-2 3.3 1 3.8-6 3.4-1.7-3.5h-4.6L11 29l-6-3.4 1-3.8-2-3.3-4-.7v-5.6l4-.7 2-3.3-1-3.8z" fill="url(#gear)" /><circle cx="15" cy="15" r="6" fill="#0d57ab" stroke="#eef4fa" strokeWidth="2" /></AppIcon></Slot>
    <Slot $run><AppIcon><path d="M0 3.5Q0 2 1.5 2H10l3 4h-3L0 10z" fill="#dc9b13" /><path d="M0 9h10l3-3h15.5Q30 6 30 7.5V27H0z" fill="url(#folder)" /><path d="M5 28v-4.5Q5 21 7.5 21h15Q25 21 25 23.5V28z" fill="#1578c5" /><path d="M8.5 24.5h13" stroke="#0b4e91" /></AppIcon></Slot>
    <Slot $run><AppIcon><rect width="30" height="30" rx="4" fill="#05b905" /><ellipse cx="15" cy="13.5" rx="11" ry="9" fill="#fff" /><path d="M12 21l3 5q4-2 6-5z" fill="#fff" /><SvgLabel x="15" y="16.3" $size={6.8} $weight={800} fill="#05a905">LINE</SvgLabel></AppIcon></Slot>
    <Slot $run $on><ActiveTile><ChromeColor><circle cx="26" cy="3.5" r="9.8" fill="#dadde2" /><circle cx="26" cy="1" r="3.2" fill="#566273" /><path d="M20 9.5V8q0-3 6-3t6 3v1.5z" fill="#566273" /></ChromeColor></ActiveTile></Slot>
    <Slot><AppIcon><rect width="30" height="30" rx="6" fill="url(#insta)" /><rect x="5" y="5" width="20" height="20" rx="5.5" fill="none" stroke="#fff" strokeWidth="2.2" /><circle cx="15" cy="15" r="5" fill="none" stroke="#fff" strokeWidth="2.2" /><circle cx="20.8" cy="9.2" r="1.3" fill="#fff" /></AppIcon></Slot>
    <Slot><AppIcon><rect x="3" width="23" height="30" rx="1" fill="#6d7d87" /><rect x="6" y="3" width="17" height="5" fill="#55d6f5" />{[10, 16, 22].map((y) => [6, 12, 18].map((x) => <rect key={`${x}-${y}`} x={x} y={y} width="5" height="5" fill="#d4dce2" />))}<rect x="18" y="16" width="5" height="11" fill="#12468a" /></AppIcon></Slot>
    <Slot><AppIcon><rect x="2" y="2" width="26" height="26" rx="2" fill="#239be0" /><path d="M2 9V4q0-2 2-2h22q2 0 2 2v5z" fill="#0a5aa3" /><path d="M6.5 0v6M23.5 0v6" stroke="#4ac8f2" strokeWidth="3" />{CALENDAR_CELLS.map(([x, y]) => <rect key={`${x}-${y}`} x={x} y={y} width="3" height="3" fill="#fff" />)}</AppIcon></Slot>
    <Slot><AppIcon><rect x="9" y="1" width="20.5" height="27" rx="1" fill="#2359b9" /><path d="M9 1h20.5v7H9z" fill="#4ba5ef" /><path d="M9 8h20.5v7H9z" fill="#2e7cd6" /><path d="M9 21h20.5v7H9z" fill="#17408e" /><rect y="7" width="16" height="16" rx="1.5" fill="#1b50a8" /><SvgLabel x="8" y="19" $size={11.5} fill="#fff">W</SvgLabel></AppIcon></Slot>
    <Slot><AppIcon><rect x="9" y="1" width="20.5" height="27" rx="1" fill="#1e7f48" /><path d="M9 1h10.5v7H9z" fill="#25a568" /><path d="M19.5 1h10v7h-10z" fill="#34c58a" /><path d="M19.5 8h10v7h-10z" fill="#25a568" /><path d="M9 21h20.5v7H9z" fill="#1a5c38" /><rect y="7" width="16" height="16" rx="1.5" fill="#127541" /><SvgLabel x="8" y="19" $size={12} fill="#fff">X</SvgLabel></AppIcon></Slot>
    <Slot $run><AppIcon><rect x="1" y="3.5" width="27" height="22" fill="#050505" stroke="#b9b9b9" /><path d="M1.5 5h26" stroke="#ccc" strokeWidth="1.5" /><path d="M6.5 8.3H4.2v2.7h2.3M8 8.5v.8M8 10.3v.8M9.8 8l1.5 3M13 11h5" fill="none" stroke="#ddd" strokeWidth=".9" /></AppIcon></Slot>
    <Slot $run>
      <AppIcon>
        <g clipPath="url(#ball)">
          <rect width="30" height="30" fill="#333" />
          <g fill="none" stroke="#e2e2e2" strokeWidth="1.3">
            {BALL_LINES.map((y) => <path key={y} d={`M-1 ${y + 1}Q9 ${y + 2} 15 ${y + 8}T32 ${y + 13}`} />)}
          </g>
          <rect width="30" height="30" fill="url(#shade)" />
        </g>
      </AppIcon>
    </Slot>
    <Slot $run><AppIcon><path d="M1 16C1 7 8 1 16 1s14 6 13 15c-1 7-5 6-9 5-3 0-2 3-4 6-3 4-8 1-7-4 1-4-8 1-8-7z" fill="url(#paint)" /><circle cx="5.5" cy="15" r="2.5" fill="#d4512d" /><circle cx="8.5" cy="9" r="2.5" fill="#4aab3d" /><circle cx="15.5" cy="6.5" r="2.5" fill="#ffca38" /><circle cx="15" cy="16.5" r="2" fill="#12375f" /><path d="M20 10h5.5v6h-5.5z" fill="#ead9bd" /><path d="M22.7 16v12" stroke="#c97c27" strokeWidth="2.8" strokeLinecap="round" /></AppIcon></Slot>
    <Slot $run><ChromeColor><circle cx="26" cy="3.5" r="9.8" fill="#8d6e63" /><SvgLabel x="26" y="6.8" $size={8.5} fill="#e6dedb">朱</SvgLabel><circle cx="22" cy="22.5" r="7.5" fill="#8d6e63" /><SvgLabel x="22" y="25" $size={6.5} fill="#fff">朱</SvgLabel></ChromeColor></Slot>
  </>
);

const TrayArea = () => (
  <Tray>
    <Icon width="16" height="9" viewBox="0 0 16 9"><path d="M.5 8.5L8 1l7.5 7.5" fill="none" stroke="#eee" strokeWidth="1.5" /></Icon>
    <Icon width="20" height="13" viewBox="0 0 20 13" $ml={11}><path d="M4 10a4 4 0 0 1 1-7 6 6 0 0 1 10-1 5 5 0 0 1 2 6z" fill="#a5a5a5" /><path d="M3.5 13a3.5 3.5 0 0 1 0-6.8C7 5.5 9 7 10.5 8c2-2 7-1.5 8 .5a2.6 2.6 0 0 1-1.5 4.5z" fill="#fff" /></Icon>
    <Icon width="18" height="19" viewBox="0 0 18 19" $ml={16}><path d="M1 4h16v9.5H1zM9 0v19" fill="none" stroke="#f2f2f2" strokeWidth="1.5" /></Icon>
    <Icon width="20" height="15" viewBox="0 0 20 15" $ml={21}><path d="M.7 5.5a13 13 0 0 1 18.6 0" fill="none" stroke="#5b5b5b" strokeWidth="1.4" /><path d="M3.6 8a9 9 0 0 1 12.8 0" fill="none" stroke="#777" strokeWidth="1.4" /><path d="M6 10.8a5.6 5.6 0 0 1 8 0" fill="none" stroke="#fff" strokeWidth="1.6" /><circle cx="10" cy="13" r="1.9" fill="#fff" /></Icon>
    <Icon width="19" height="14" viewBox="0 0 19 14" $ml={10}><path d="M.7 4.7h3L8 .9v12.2L3.7 9.3h-3z" fill="none" stroke="#eee" strokeWidth="1.3" strokeLinejoin="round" /><path d="M12 4l6 6M18 4l-6 6" stroke="#eee" strokeWidth="1.4" /></Icon>
    <Icon width="20" height="16" viewBox="0 0 20 16" $ml={11}><path d="M8 3.5h8.5q1.5 0 1.5 1.5v8q0 1.5-1.5 1.5H5V10" fill="none" stroke="#eee" strokeWidth="1.4" /><rect x="7" y="5.8" width="8.5" height="6.5" fill="#fff" /><path d="M19 7v4" stroke="#eee" strokeWidth="2" /><path d="M0 3h6.5v3.5L3.3 8.5 0 6.5zM1.7 0v3M4.8 0v3M3.3 8v7" fill="#fff" stroke="#fff" strokeWidth="1.2" /></Icon>
    <Clock>
      <Text $size={14} $color="#fff" $lh={20} $align="right" $ls={-0.1}>上午 10:46</Text>
      <Text $size={14} $color="#fff" $lh={20} $align="right">2022/3/9</Text>
    </Clock>
    <Badge><Text $size={12} $lh={18} $color="#111">4</Text></Badge>
  </Tray>
);

export default function App() {
  return (
    <Screen>
      <GlobalStyle />
      <Tabs />
      <AddressBar />
      <BookmarksBar />
      <Viewport>
        <GitHubPage />
        <ScrollBar>
          <Icon width="10" height="6" viewBox="0 0 10 6"><path d="M0 6l5-6 5 6z" fill="#505050" /></Icon>
          <Thumb />
          <Icon width="10" height="6" viewBox="0 0 10 6"><path d="M0 0l5 6 5-6z" fill="#505050" /></Icon>
        </ScrollBar>
      </Viewport>
      <Taskbar>
        <TaskApps />
        <TrayArea />
      </Taskbar>
    </Screen>
  );
}
